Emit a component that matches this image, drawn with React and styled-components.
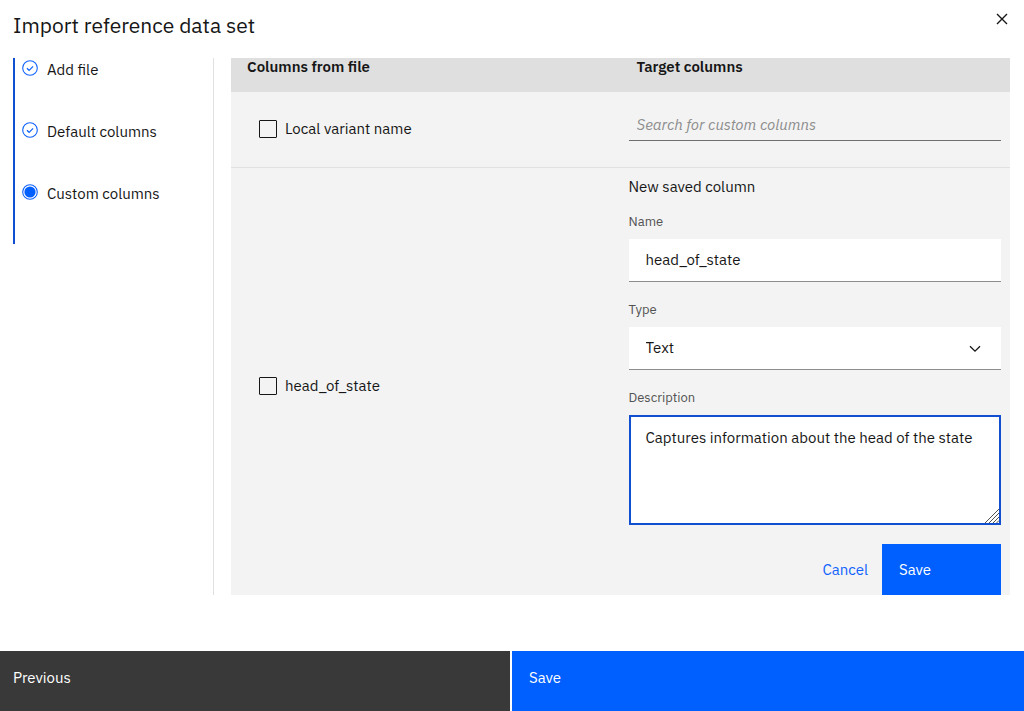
import React, { useState } from 'react';
import styled, { createGlobalStyle } from 'styled-components';

const steps = [
    { label: 'Add file', done: true },
    { label: 'Default columns', done: true },
    { label: 'Custom columns', done: false },
];

const StepIcon = ({ done }) => (
    <svg width="16" height="16" viewBox="0 0 16 16" fill="none" stroke="#0f62fe" aria-hidden="true">
        <circle cx="8" cy="8" r="7.3" strokeWidth="1.1" />
        {done ? (
            <path d="M4.9 8.2l2.2 2.1 4-4" strokeWidth="1.2" />
        ) : (
            <circle cx="8" cy="8" r="5.6" fill="#0060ff" stroke="none" />
        )}
    </svg>
);

const App = () => {
    const [name, setName] = useState('head_of_state');
    const [description, setDescription] = useState('Captures information about the head of the state');

    return (
        <Page>
            <GlobalStyle />
            <Header>
                <Title>Import reference data set</Title>
                <CloseButton type="button" aria-label="Close">
                    <svg width="12" height="12" viewBox="0 0 12 12" stroke="#161616" strokeWidth="1.4">
                        <path d="M1 1l10 10M11 1L1 11" />
                    </svg>
                </CloseButton>
            </Header>
            <Body>
                <Sidebar>
                    <StepList>
                        {steps.map((step) => (
                            <Step key={step.label}>
                                <StepIcon done={step.done} />
                                <span>{step.label}</span>
                            </Step>
                        ))}
                    </StepList>
                </Sidebar>
                <TableArea>
                    <Table>
                        <thead>
                            <tr>
                                <HeadCell>Columns from file</HeadCell>
                                <HeadCell>Target columns</HeadCell>
                            </tr>
                        </thead>
                        <tbody>
                            <Row>
                                <FileCell>
                                    <CheckLabel>
                                        <Checkbox type="checkbox" />
                                        Local variant name
                                    </CheckLabel>
                                </FileCell>
                                <SearchCell>
                                    <SearchInput
                                        type="text"
                                        aria-label="Search for custom columns"
                                        placeholder="Search for custom columns"
                                    />
                                </SearchCell>
                            </Row>
                            <tr>
                                <FileCell>
                                    <CheckLabel>
                                        <Checkbox type="checkbox" />
                                        head_of_state
                                    </CheckLabel>
                                </FileCell>
                                <FormCell>
                                    <FormTitle>New saved column</FormTitle>
                                    <Field>
                                        <FieldLabel htmlFor="name">Name</FieldLabel>
                                        <TextInput id="name" value={name} onChange={(e) => setName(e.target.value)} />
                                    </Field>
                                    <Field>
                                        <FieldLabel htmlFor="type">Type</FieldLabel>
                                        <Control>
                                            <Select id="type" defaultValue="Text">
                                                <option>Text</option>
                                                <option>Number</option>
                                                <option>Date</option>
                                            </Select>
                                            <Chevron viewBox="0 0 12 8">
                                                <path d="M1 1.2l5 5 5-5" />
                                            </Chevron>
                                        </Control>
                                    </Field>
                                    <Field>
                                        <FieldLabel htmlFor="description">Description</FieldLabel>
                                        <Control>
                                            <TextArea
                                                id="description"
                                                value={description}
                                                onChange={(e) => setDescription(e.target.value)}
                                            />
                                            <Grip viewBox="0 0 14 14">
                                                <path d="M0 14L14 0M4 14L14 4M8 14l6-6M11.5 14l2.5-2.5" />
                                            </Grip>
                                        </Control>
                                    </Field>
                                    <FormActions>
                                        <CancelButton type="button">Cancel</CancelButton>
                                        <SaveButton type="button">Save</SaveButton>
                                    </FormActions>
                                </FormCell>
                            </tr>
                        </tbody>
                    </Table>
                </TableArea>
            </Body>
            <Footer>
                <FooterButton type="button" $color="#393939" $indent={13}>Previous</FooterButton>
                <FooterButton type="button" $color="#0060ff" $indent={17}>Save</FooterButton>
            </Footer>
        </Page>
    );
};

export default App;

const GlobalStyle = createGlobalStyle`
    * {
        box-sizing: border-box;
    }

    body {
        margin: 0;
        background-color: white;
    }

    body, button, input, select, textarea {
        font-family: 'IBM Plex Sans', 'Noto Sans', sans-serif;
        font-size: 15px;
        line-height: 20px;
        color: #161616;
    }
`;

const Page = styled.div`
    height: 100vh;
    display: flex;
    flex-direction: column;
`;

const Header = styled.header`
    height: 58px;
    flex-shrink: 0;
    display: flex;
    justify-content: space-between;
    align-items: flex-start;
    padding: 7px 10px 0 13px;
`;

const Title = styled.h1`
    margin: 4px 0 0;
    font-size: 21px;
    font-weight: 400;
    line-height: 28px;
`;

const CloseButton = styled.button`
    width: 24px;
    height: 24px;
    display: flex;
    justify-content: center;
    align-items: center;
    padding: 0;
    border: none;
    background: none;
`;

const Body = styled.main`
    flex: 1;
    min-height: 0;
    display: flex;
    gap: 17px;
    padding: 0 14px 0 13px;
    margin-bottom: 56px;
`;

const Sidebar = styled.nav`
    width: 201px;
    flex-shrink: 0;
    border-right: 1px solid #e0e0e0;
`;

const StepList = styled.ol`
    margin: 0;
    padding: 0;
    border-left: 2px solid #0f4fd0;
    list-style: none;
`;

const Step = styled.li`
    height: 62px;
    display: flex;
    align-items: flex-start;
    gap: 9px;
    padding: 2px 0 0 7px;
`;

const TableArea = styled.section`
    flex: 1;
    overflow: auto;
    scrollbar-width: none;
`;

const Table = styled.table`
    width: 100%;
    table-layout: fixed;
    border-collapse: collapse;
    background-color: #f3f3f3;
`;

const HeadCell = styled.th`
    height: 34px;
    padding: 0 16px 16px;
    background-color: #dfdfdf;
    font-weight: 600;
    line-height: 18px;
    text-align: left;
`;

const Row = styled.tr`
    border-bottom: 1px solid #e0e0e0;
`;

const FileCell = styled.td`
    padding: 0 28px;
`;

const CheckLabel = styled.label`
    display: flex;
    align-items: center;
    gap: 8px;
`;

const Checkbox = styled.input`
    appearance: none;
    width: 18px;
    height: 18px;
    margin: 0;
    border: 1px solid #161616;
    border-radius: 1px;

    &:checked {
        background-color: #161616;
    }
`;

const SearchCell = styled.td`
    height: 75px;
    padding: 17px 9px 25px 8px;
`;

const SearchInput = styled.input`
    display: block;
    width: 100%;
    height: 32px;
    padding: 0 8px;
    border: none;
    border-bottom: 1px solid #6f6f6f;
    background: none;

    &::placeholder {
        color: #8d8d8d;
        font-style: italic;
    }
`;

const FormCell = styled.td`
    padding: 9px 9px 9px 8px;
`;

const FormTitle = styled.h2`
    margin: 0 0 16px;
    font-size: 15px;
    font-weight: 400;
    line-height: 20px;
`;

const Field = styled.div`
    display: flex;
    flex-direction: column;
    gap: 8px;
    margin-bottom: 19px;
`;

const FieldLabel = styled.label`
    color: #525252;
    font-size: 13px;
    line-height: 18px;
`;

const Control = styled.div`
    position: relative;
`;

const TextInput = styled.input`
    width: 100%;
    height: 43px;
    padding: 0 17px;
    border: none;
    border-bottom: 1px solid #8d8d8d;
    border-radius: 0;
    background-color: white;
`;

const Select = styled(TextInput).attrs({ as: 'select' })`
    display: block;
    appearance: none;
`;

const Chevron = styled.svg`
    position: absolute;
    top: 18px;
    right: 20px;
    width: 12px;
    height: 8px;
    fill: none;
    stroke: #161616;
    stroke-width: 1.3;
    pointer-events: none;
`;

const TextArea = styled.textarea`
    display: block;
    width: 100%;
    height: 110px;
    padding: 11px 15px;
    border: 2px solid #0f4fd0;
    border-radius: 0;
    outline: none;
    background-color: white;
    resize: none;
`;

const Grip = styled.svg`
    position: absolute;
    right: 2px;
    bottom: 2px;
    width: 14px;
    height: 14px;
    fill: none;
    stroke: #525252;
    pointer-events: none;
`;

const FormActions = styled.div`
    display: flex;
    justify-content: flex-end;
`;

const CancelButton = styled.button`
    height: 52px;
    padding: 0 14px;
    border: none;
    background: none;
    color: #0f62fe;
`;

const SaveButton = styled.button`
    width: 119px;
    height: 52px;
    padding: 0 17px;
    border: none;
    background-color: #0060ff;
    color: white;
    text-align: left;
`;

const Footer = styled.footer`
    height: 60px;
    flex-shrink: 0;
    display: grid;
    grid-template-columns: calc(50% - 2px) 1fr;
    gap: 2px;
`;

const FooterButton = styled.button`
    display: flex;
    align-items: flex-start;
    padding: 17px ${(props) => props.$indent}px;
    border: none;
    background-color: ${(props) => props.$color};
    color: white;
`;
